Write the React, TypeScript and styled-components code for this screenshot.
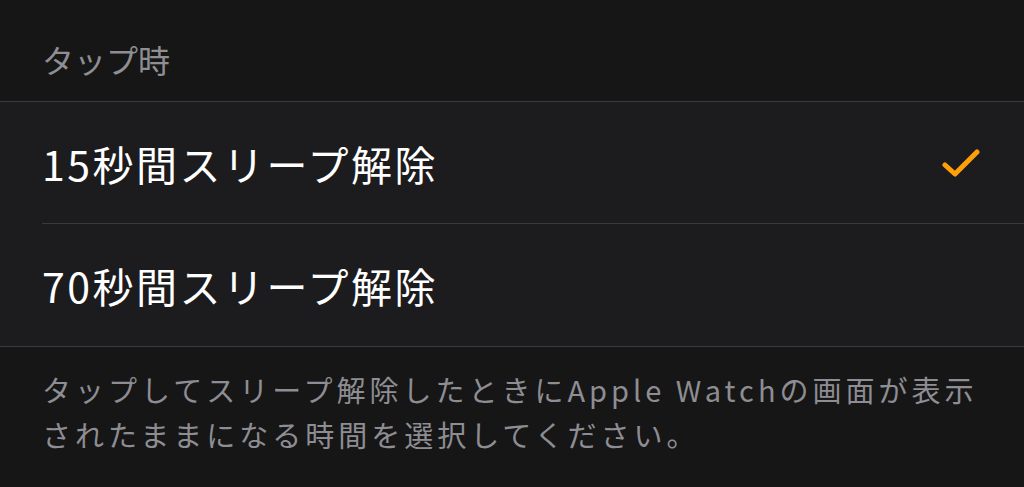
import React from 'react';
import styled, { createGlobalStyle } from 'styled-components';

const GlobalStyle = createGlobalStyle`
  html, body {
    margin: 0;
    padding: 0;
    background: #161616;
  }
  body {
    font-family: "Noto Sans CJK JP", "Noto Sans", sans-serif;
  }
`;

const Page = styled.div`
  width: 1024px;
  height: 487px;
  overflow: hidden;
  background: #161616;
`;

const SectionHeader = styled.div`
  height: 101px;
  box-sizing: border-box;
  padding: 16px 42px 0;
  display: flex;
  align-items: center;
  font-size: 32px;
  color: #8e8e93;
`;

const Group = styled.div`
  background: #1c1c1e;
  border-top: 1px solid #3a3a3c;
  border-bottom: 1px solid #3a3a3c;
`;

const Row = styled.div<{ $divider?: boolean }>`
  position: relative;
  height: 122px;
  box-sizing: border-box;
  padding: 0 44px 0 42px;
  display: flex;
  align-items: center;
  justify-content: space-between;

  &::after {
    content: '';
    display: ${(p) => (p.$divider ? 'block' : 'none')};
    position: absolute;
    left: 42px;
    right: 0;
    bottom: 0;
    height: 1px;
    background: #3a3a3c;
  }
`;

const RowLabel = styled.span`
  font-size: 41px;
  letter-spacing: 2.5px;
  color: #ffffff;
`;

const Check = styled.svg`
  width: 38px;
  height: 30px;
  flex-shrink: 0;
`;

const Footer = styled.div`
  padding: 20px 42px 0;
  font-size: 29px;
  line-height: 45px;
  letter-spacing: 4px;
  color: #8d8d93;
`;

const options = [
  { label: '15秒間スリープ解除', selected: true },
  { label: '70秒間スリープ解除', selected: false },
];

const App = () => {
  return (
    <Page>
      <GlobalStyle />
      <SectionHeader>タップ時</SectionHeader>
      <Group>
        {options.map((o, i) => (
          <Row key={o.label} $divider={i < options.length - 1}>
            <RowLabel>{o.label}</RowLabel>
            {o.selected && (
              <Check viewBox="0 0 38 30">
                <path
                  d="M3 17 L13 26 L35 4"
                  fill="none"
                  stroke="#ff9f0a"
                  strokeWidth="5"
                  strokeLinecap="round"
                  strokeLinejoin="round"
                />
              </Check>
            )}
          </Row>
        ))}
      </Group>
      <Footer>
        タップしてスリープ解除したときにApple Watchの画面が表示
        <br />
        されたままになる時間を選択してください。
      </Footer>
    </Page>
  );
};

export default App;
